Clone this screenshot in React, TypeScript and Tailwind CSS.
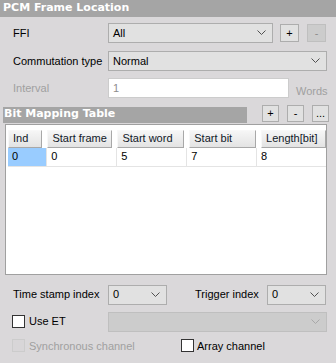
import React from "react";

const Chevron = ({ color = "#505050" }: { color?: string }) => (
  <svg width="9" height="6" viewBox="0 0 9 6" className="block">
    <polyline points="0.5,0.5 4.5,4.5 8.5,0.5" fill="none" stroke={color} strokeWidth="1" />
  </svg>
);

const Combo = ({ value, w, disabled }: { value?: string; w: string; disabled?: boolean }) => (
  <div
    className={`${w} h-[20px] flex items-center justify-between pl-[4px] pr-[6px] border ${
      disabled ? "bg-[#cccccc] border-[#bfbfbf]" : "bg-[#e1e1e1] border-[#adadad]"
    }`}
  >
    <span className="text-black">{value}</span>
    <Chevron color={disabled ? "#a8a8a8" : "#505050"} />
  </div>
);

const SmallBtn = ({ label, disabled, size = "w-[19px] h-[18px]" }: { label: string; disabled?: boolean; size?: string }) => (
  <div
    className={`${size} flex items-center justify-center border leading-none ${
      disabled ? "bg-[#cccccc] border-[#bfbfbf] text-[#8d8d8d]" : "bg-[#e1e1e1] border-[#adadad] text-black"
    }`}
  >
    {label}
  </div>
);

const CheckBox = ({ disabled }: { disabled?: boolean }) => (
  <div
    className={`w-[13px] h-[13px] border ${disabled ? "border-[#cccccc] bg-[#d8d6d8]" : "border-[#333333] bg-white"}`}
  />
);

const cols = [
  { name: "Ind", w: "w-[35px]", v: "0" },
  { name: "Start frame", w: "w-[66px]", v: "0" },
  { name: "Start word", w: "w-[68px]", v: "5" },
  { name: "Start bit", w: "w-[68px]", v: "7" },
  { name: "Length[bit]", w: "w-[66px]", v: "8" },
];

const headFont = { fontFamily: '"DejaVu Sans", Verdana, sans-serif' };

export default function App() {
  return (
    <div
      className="w-[336px] h-[363px] bg-[#dad8da] text-[11px] text-black overflow-hidden"
      style={{ fontFamily: '"Liberation Sans", Arial, sans-serif' }}
    >
      <div
        className="h-[17px] bg-[#a5a5a5] text-white font-bold text-[11px] pl-[3px] flex items-center"
        style={headFont}
      >
        PCM Frame Location
      </div>

      <div className="flex items-center mt-[6px]">
        <div className="w-[108px] pl-[13px]">FFI</div>
        <Combo value="All" w="w-[165px]" />
        <div className="ml-[7px]">
          <SmallBtn label="+" />
        </div>
        <div className="ml-[8px]">
          <SmallBtn label="-" disabled />
        </div>
      </div>

      <div className="flex items-center mt-[8px]">
        <div className="w-[108px] pl-[13px]">Commutation type</div>
        <Combo value="Normal" w="w-[219px]" />
      </div>

      <div className="flex items-center mt-[6px]">
        <div className="w-[108px] pl-[13px] text-[#a0a0a0]">Interval</div>
        <div className="w-[181px] h-[20px] bg-white border border-[#cccccc] flex items-center pl-[4px] text-[#8d8d8d]">
          1
        </div>
        <div className="ml-[7px] text-[#a0a0a0] mt-[6px]">Words</div>
      </div>

      <div className="flex items-start mt-[5px] pl-[3px]">
        <div
          className="w-[244px] h-[16px] mt-[2px] bg-[#a5a5a5] text-white font-bold text-[11px] pl-[1px] flex items-center"
          style={headFont}
        >
          Bit Mapping Table
        </div>
        <div className="ml-[15px] flex gap-[8px]">
          <SmallBtn label="+" size="w-[17px] h-[17px]" />
          <SmallBtn label="-" size="w-[17px] h-[17px]" />
          <SmallBtn label="..." size="w-[17px] h-[17px]" />
        </div>
      </div>

      <div className="ml-[5px] mt-[1px] w-[322px] h-[151px] bg-white border border-[#a0a0a0] pt-[5px] pl-[2px]">
        <div className="flex gap-[5px]">
          {cols.map((c) => (
            <div
              key={c.name}
              className={`${c.w} h-[18px] flex items-center pl-[4px] border border-t-[#f8f8f8] border-l-[#f8f8f8] border-r-[#a8a8a8] border-b-[#a8a8a8] bg-gradient-to-b from-[#f6f6f6] to-[#e3e3e3] whitespace-nowrap text-[#101828]`}
            >
              {c.name}
            </div>
          ))}
        </div>
        <div className="flex">
          {cols.map((c, i) => (
            <div
              key={c.name}
              className={`${i === 0 ? "w-[40px] bg-[#99ccff]" : "w-[73px] bg-white border-l border-[#e4e4e4]"} ${
                i === 4 ? "w-[66px]" : ""
              } h-[19px] flex items-center pl-[4px] border-b border-[#e4e4e4]`}
            >
              {c.v}
            </div>
          ))}
        </div>
      </div>

      <div className="flex items-center mt-[10px]">
        <div className="w-[108px] pl-[13px]">Time stamp index</div>
        <Combo value="0" w="w-[59px]" />
        <div className="ml-[28px] w-[72px]">Trigger index</div>
        <Combo value="0" w="w-[59px]" />
      </div>

      <div className="flex items-center mt-[7px]">
        <div className="w-[108px] pl-[12px] flex items-center">
          <CheckBox />
          <span className="ml-[4px]">Use ET</span>
        </div>
        <Combo w="w-[219px]" disabled />
      </div>

      <div className="flex items-center mt-[6px]">
        <div className="w-[181px] pl-[12px] flex items-center">
          <CheckBox disabled />
          <span className="ml-[4px] text-[#a0a0a0]">Synchronous channel</span>
        </div>
        <div className="flex items-center">
          <CheckBox />
          <span className="ml-[3px]">Array channel</span>
        </div>
      </div>
    </div>
  );
}
